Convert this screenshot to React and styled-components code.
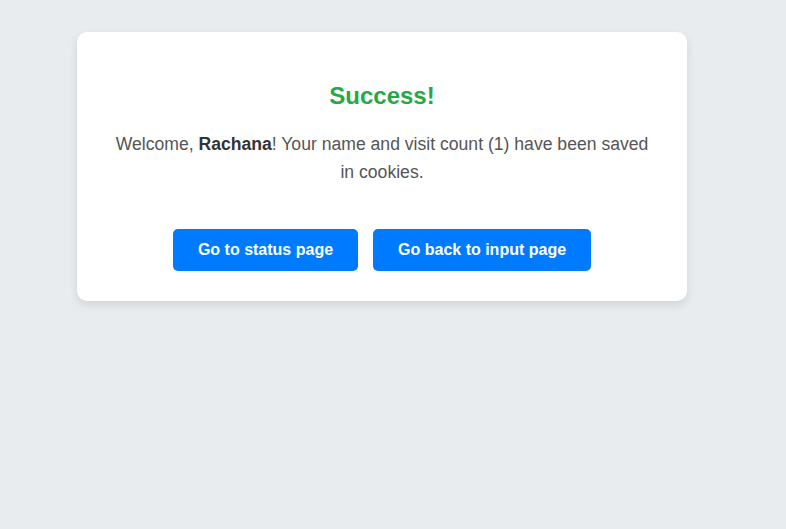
import React from "react";
import styled, { createGlobalStyle } from "styled-components";

const GlobalStyle = createGlobalStyle`
    body {
        margin: 0;
        background: #e9ecef;
        font-family: "Liberation Sans", Arial, sans-serif;
    }
`;

const App = () => {
    return (
        <>
            <GlobalStyle />
            <Page>
                <Card>
                    <Title>Success!</Title>
                    <Message>
                        Welcome, <Name>Rachana</Name>! Your name and visit count (1) have been saved in cookies.
                    </Message>
                    <ButtonRow>
                        <Button>Go to status page</Button>
                        <Button>Go back to input page</Button>
                    </ButtonRow>
                </Card>
            </Page>
        </>
    );
};

// 전체 페이지
const Page = styled.div`
    min-height: 529px;
    padding: 32px 0 0 77px;
    box-sizing: border-box;
`;

// 결과 카드
const Card = styled.div`
    width: 610px;
    box-sizing: border-box;
    padding: 30px;
    background: #fff;
    border-radius: 10px;
    box-shadow: 0 4px 10px rgba(0, 0, 0, 0.1);
    text-align: center;
`;

const Title = styled.h2`
    margin: 20px 0;
    font-size: 24px;
    font-weight: bold;
    color: #28a745;
`;

const Message = styled.p`
    margin: 18px 0 0;
    font-size: 17.6px;
    line-height: 1.6;
    color: #555;
`;

const Name = styled.strong`
    color: #333;
`;

const ButtonRow = styled.div`
    display: flex;
    justify-content: center;
    gap: 15px;
    margin-top: 43px;
`;

const Button = styled.button`
    padding: 12px 25px;
    border: none;
    border-radius: 5px;
    background: #007bff;
    color: #fff;
    font-family: inherit;
    font-size: 16px;
    font-weight: bold;
    line-height: 18px;
    cursor: pointer;
`;

export default App;
